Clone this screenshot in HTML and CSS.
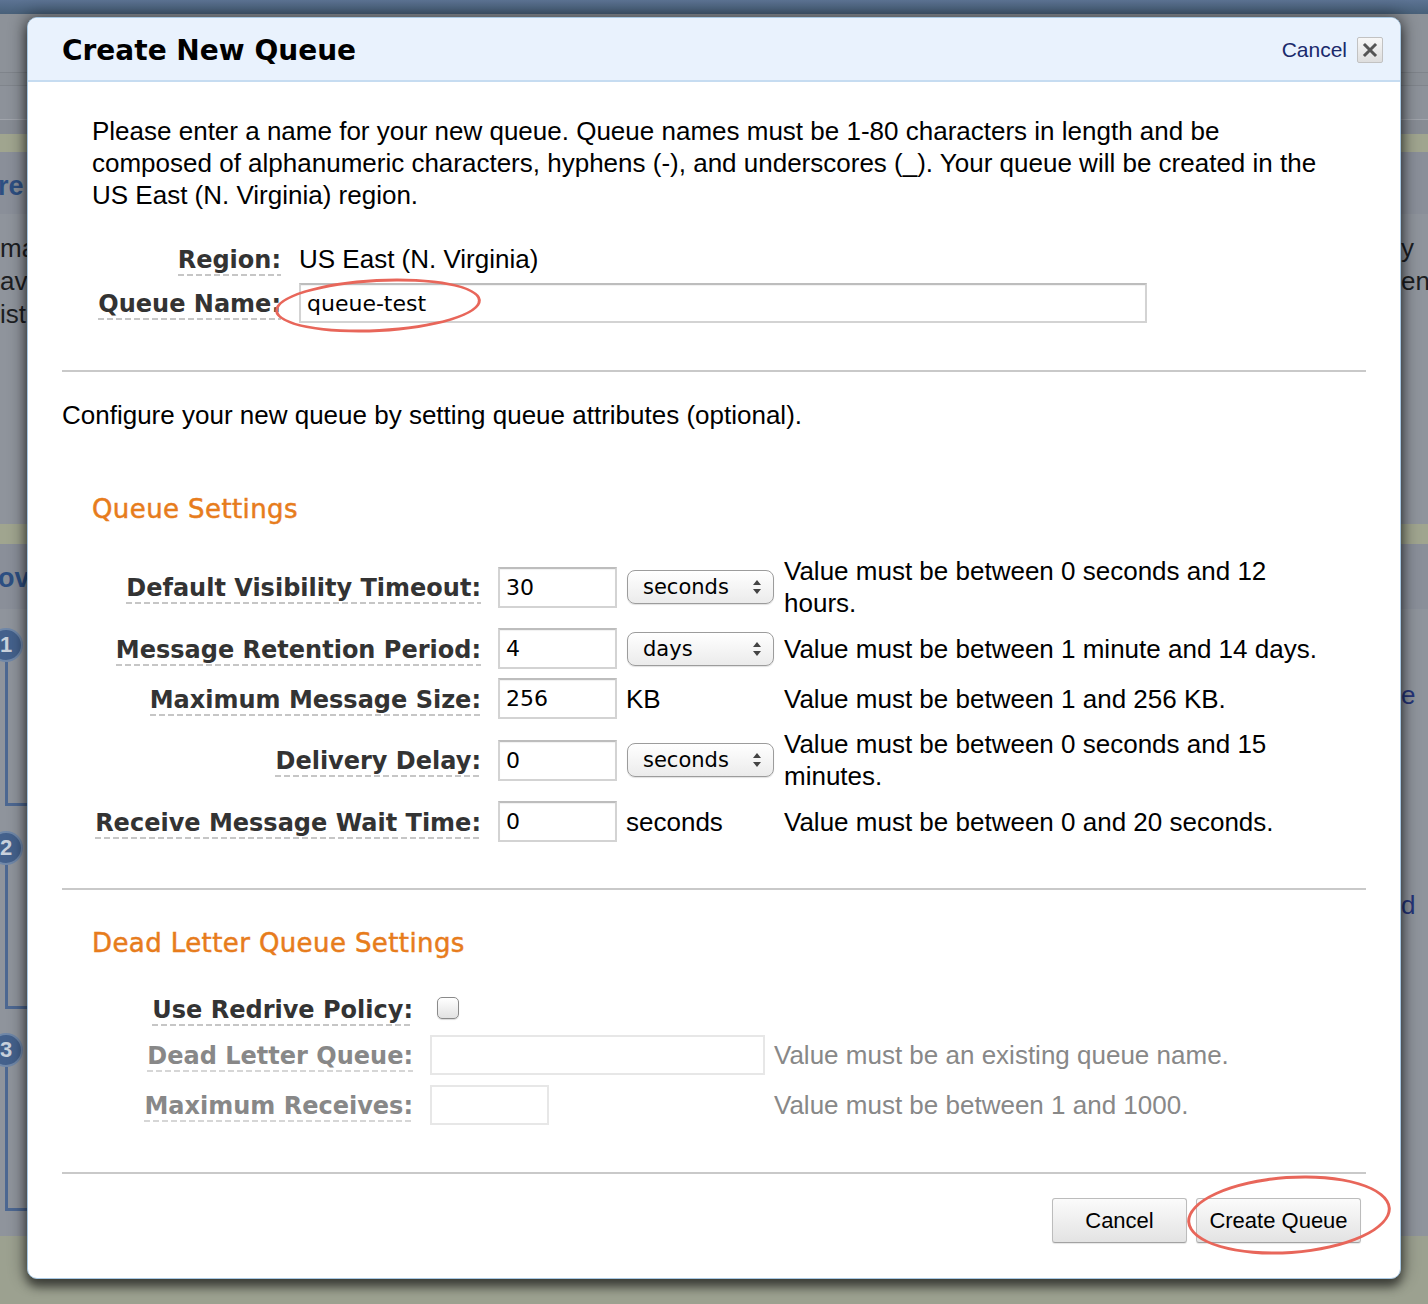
FILE: index.html
```html
<!DOCTYPE html>
<html lang="en">
<head>
<meta charset="utf-8">
<title>Create New Queue</title>
<link rel="stylesheet" href="styles.css">
</head>
<body>
<div class="backdrop">
  <div class="bg-top"></div>
  <div class="bg-nav"></div>
  <div class="bg-sub"></div>
  <div class="bg-olive"></div>
  <div class="bg-band bg-head"><span class="frag-h">re</span><span class="frag-r"></span></div>
  <div class="bg-band bg-text">
    <div class="frag-l"><div>ma</div><div>av</div><div>ist</div></div>
    <div class="frag-r"><div>y</div><div>en</div></div>
  </div>
  <div class="bg-olive bg-olive2"></div>
  <div class="bg-band bg-head2"><span class="frag-h">ov</span><span class="frag-r"></span></div>
  <div class="bg-band bg-steps">
    <div class="steps">
      <div class="step"><span class="num">1</span><div class="step-box"></div></div>
      <div class="step"><span class="num">2</span><div class="step-box"></div></div>
      <div class="step"><span class="num">3</span><div class="step-box"></div></div>
    </div>
    <div class="frag-r frag-r2"><div class="blue">e</div><div class="dk">d</div></div>
  </div>
  <div class="bg-foot"></div>
</div>

<div class="dialog">
  <div class="dlg-head">
    <h1 class="dlg-title">Create New Queue</h1>
    <div class="dlg-close">
      <a class="close-link">Cancel</a>
      <span class="xbtn"><svg width="26" height="26" viewBox="0 0 26 26"><path d="M8 8 L18 18 M18 8 L8 18" stroke="#555" stroke-width="3" stroke-linecap="square"/></svg></span>
    </div>
  </div>
  <div class="dlg-body">
    <p class="intro">Please enter a name for your new queue. Queue names must be 1-80 characters in length and be composed of alphanumeric characters, hyphens (-), and underscores (_). Your queue will be created in the US East (N. Virginia) region.</p>

    <div class="name-grid">
      <div class="lbl"><span>Region:</span></div>
      <div class="val">US East (N. Virginia)</div>
      <div class="lbl"><span>Queue Name:</span></div>
      <div class="field-wrap"><input class="txt txt-wide" type="text" value="queue-test"><span class="mark mark-name"></span></div>
    </div>

    <div class="rule rule-1"></div>
    <p class="config">Configure your new queue by setting queue attributes (optional).</p>

    <h2 class="section section-1">Queue Settings</h2>
    <div class="settings-grid">
      <div class="lbl"><span>Default Visibility Timeout:</span></div>
      <input class="txt txt-sm" type="text" value="30">
      <div class="select"><span>seconds</span><svg class="arr" width="10" height="16" viewBox="0 0 10 16"><path d="M5 1 L9 6 H1 Z M1 10 H9 L5 15 Z" fill="#444"/></svg></div>
      <div class="help">Value must be between 0 seconds and 12 hours.</div>

      <div class="lbl"><span>Message Retention Period:</span></div>
      <input class="txt txt-sm" type="text" value="4">
      <div class="select"><span>days</span><svg class="arr" width="10" height="16" viewBox="0 0 10 16"><path d="M5 1 L9 6 H1 Z M1 10 H9 L5 15 Z" fill="#444"/></svg></div>
      <div class="help">Value must be between 1 minute and 14 days.</div>

      <div class="lbl"><span>Maximum Message Size:</span></div>
      <input class="txt txt-sm" type="text" value="256">
      <div class="unit">KB</div>
      <div class="help">Value must be between 1 and 256 KB.</div>

      <div class="lbl"><span>Delivery Delay:</span></div>
      <input class="txt txt-sm" type="text" value="0">
      <div class="select"><span>seconds</span><svg class="arr" width="10" height="16" viewBox="0 0 10 16"><path d="M5 1 L9 6 H1 Z M1 10 H9 L5 15 Z" fill="#444"/></svg></div>
      <div class="help">Value must be between 0 seconds and 15 minutes.</div>

      <div class="lbl"><span>Receive Message Wait Time:</span></div>
      <input class="txt txt-sm" type="text" value="0">
      <div class="unit">seconds</div>
      <div class="help">Value must be between 0 and 20 seconds.</div>
    </div>

    <div class="rule rule-2"></div>

    <h2 class="section section-2">Dead Letter Queue Settings</h2>
    <div class="dl-grid">
      <div class="lbl"><span>Use Redrive Policy:</span></div>
      <div class="cb-cell"><span class="checkbox"></span></div>
      <div></div>

      <div class="lbl lbl-off"><span>Dead Letter Queue:</span></div>
      <input class="txt txt-off txt-dl" type="text" value="" disabled>
      <div class="help help-off">Value must be an existing queue name.</div>

      <div class="lbl lbl-off"><span>Maximum Receives:</span></div>
      <div><input class="txt txt-off txt-sm" type="text" value="" disabled></div>
      <div class="help help-off">Value must be between 1 and 1000.</div>
    </div>

    <div class="rule rule-3"></div>

    <div class="actions">
      <button class="btn btn-cancel" type="button">Cancel</button>
      <span class="btn-wrap"><button class="btn btn-create" type="button">Create Queue</button><span class="mark mark-create"></span></span>
    </div>
  </div>
</div>
</body>
</html>
```

FILE: styles.css
```css
* { box-sizing: border-box; }

html, body {
  margin: 0;
  padding: 0;
}

body {
  width: 1428px;
  height: 1304px;
  overflow: hidden;
  position: relative;
  background: #8f949c;
  font-family: "Liberation Sans", Arial, sans-serif;
}

/* ---------- dimmed page behind the dialog ---------- */
.backdrop {
  display: flex;
  flex-direction: column;
  height: 1304px;
}

.bg-top {
  flex: none;
  height: 14px;
  background: linear-gradient(#5c7393, #486079);
}

.bg-nav {
  flex: none;
  height: 106px;
  background: linear-gradient(#8d9299 0, #8d9299 58px, #7f848b 58px, #7f848b 59px, #8b9097 59px, #8b9097 71px, #80858c 71px, #80858c 72px, #8d929a 72px);
  border-bottom: 1px solid #a0a4ab;
}

.bg-sub {
  flex: none;
  height: 14px;
  background: #878c94;
}

.bg-olive {
  flex: none;
  height: 18px;
  background: #a0a58f;
}

.bg-olive2 {
  height: 20px;
}

.bg-band {
  flex: none;
  display: flex;
  justify-content: space-between;
}

.bg-head {
  height: 62px;
  padding-top: 6px;
  align-items: center;
  background: #8a8f99;
}

.bg-head2 {
  height: 65px;
  padding-top: 4px;
  align-items: center;
  background: #8a8f99;
}

.frag-h {
  font-weight: bold;
  font-size: 27px;
  color: #2d4f82;
  margin-left: -2px;
}

.bg-text {
  height: 310px;
  padding-top: 18px;
  background: #8f949c;
  font-size: 26px;
  line-height: 33px;
  color: #1c1e22;
}

.frag-r {
  width: 27px;
  font-size: 26px;
  line-height: 33px;
  color: #1c1e22;
}

.bg-steps {
  height: 627px;
  background: #8f949c;
}

.steps {
  display: flex;
  flex-direction: column;
  padding-top: 19px;
  width: 40px;
}

.step {
  height: 204px;
}

.num {
  display: flex;
  align-items: center;
  justify-content: center;
  width: 34px;
  height: 34px;
  margin-left: -11px;
  border-radius: 50%;
  background: #44618c;
  border: 2px solid #6f87a8;
  color: #c9d1dc;
  font-weight: bold;
  font-size: 22px;
}

.step-box {
  margin-left: 5px;
  width: 40px;
  height: 144px;
  border-left: 3px solid #4d6892;
  border-bottom: 3px solid #4d6892;
}

.frag-r2 {
  padding-top: 70px;
  line-height: 33px;
}

.frag-r2 .blue {
  color: #25357a;
}

.frag-r2 .dk {
  margin-top: 177px;
  color: #25357a;
}

.bg-foot {
  flex: 1;
  background: #9ca190;
}

/* ---------- dialog ---------- */
.dialog {
  position: absolute;
  left: 27px;
  top: 17px;
  width: 1374px;
  background: #fff;
  border: 1px solid #a8c8e3;
  border-radius: 10px;
  box-shadow: 0 0 16px 3px rgba(0, 0, 0, 0.45), 0 8px 10px rgba(0, 0, 0, 0.45);
}

.dlg-head {
  height: 64px;
  display: flex;
  align-items: center;
  justify-content: space-between;
  padding: 2px 17px 0 34px;
  background: #e9f2fd;
  border-bottom: 2px solid #c6dcf1;
  border-radius: 9px 9px 0 0;
}

.dlg-title {
  margin: 0;
  font-family: "DejaVu Sans", Verdana, sans-serif;
  font-weight: bold;
  font-size: 28px;
  color: #000;
}

.dlg-close {
  display: flex;
  align-items: center;
  gap: 10px;
}

.close-link {
  font-size: 21px;
  color: #1a2a6c;
}

.xbtn {
  display: block;
  width: 26px;
  height: 26px;
  border: 1px solid #c2c2c2;
  border-radius: 2px;
  background: linear-gradient(#f7f7f7, #dedede);
}

.xbtn svg {
  display: block;
  margin: -1px;
}

.dlg-body {
  padding: 33px 34px 35px 34px;
}

.intro {
  margin: 0 30px 0 30px;
  font-size: 26px;
  line-height: 32px;
  color: #000;
}

/* labels */
.lbl {
  justify-self: end;
  align-self: center;
  margin-top: 4px;
}

.lbl span {
  display: inline-block;
  font-family: "DejaVu Sans", Verdana, sans-serif;
  font-weight: bold;
  font-size: 24px;
  line-height: 28px;
  padding-bottom: 2px;
  color: #333;
  white-space: nowrap;
  background: repeating-linear-gradient(to right, #c6c6c6 0, #c6c6c6 6px, transparent 6px, transparent 9px) left bottom / 100% 2px no-repeat;
}

.lbl-off span {
  color: #888;
  background: repeating-linear-gradient(to right, #d6d6d6 0, #d6d6d6 6px, transparent 6px, transparent 9px) left bottom / 100% 2px no-repeat;
}

/* region & name */
.name-grid {
  display: grid;
  grid-template-columns: 181px 848px;
  grid-template-rows: 32px 40px;
  column-gap: 18px;
  row-gap: 8px;
  margin: 32px 0 0 38px;
  align-items: center;
}

.val {
  font-size: 26px;
  line-height: 32px;
  color: #000;
}

.field-wrap {
  position: relative;
  height: 40px;
}

.txt {
  display: block;
  margin: 0;
  height: 41px;
  border: 2px solid #d3d3d3;
  border-top-color: #bdbdbd;
  border-radius: 0;
  padding: 0 6px;
  background: #fff;
  box-shadow: inset 0 1px 1px rgba(0, 0, 0, 0.06);
  font-family: "DejaVu Sans", Verdana, sans-serif;
  font-size: 22px;
  color: #000;
  outline: none;
}

.txt-wide {
  width: 848px;
  height: 40px;
}

.txt-sm {
  width: 119px;
}

.txt-dl {
  width: 335px;
  height: 40px;
}

.txt-off {
  height: 40px;
  border-color: #e7e7e7;
  box-shadow: none;
}

.mark {
  position: absolute;
  border: 3px solid #e8665a;
  border-radius: 50%;
  pointer-events: none;
}

.mark-name {
  left: -24px;
  top: -4px;
  width: 206px;
  height: 53px;
  transform: rotate(-3deg);
}

/* rules & text */
.rule {
  height: 2px;
  background: #c9c9c9;
}

.rule-1 { margin-top: 47px; }
.rule-2 { margin-top: 46px; }
.rule-3 { margin-top: 47px; }

.config {
  margin: 27px 0 0 0;
  font-size: 26px;
  line-height: 32px;
  color: #000;
}

.section {
  margin: 0 0 0 30px;
  font-family: "DejaVu Sans", Verdana, sans-serif;
  font-weight: normal;
  font-size: 26px;
  line-height: 32px;
  letter-spacing: 0.4px;
  color: #e77c1c;
  -webkit-text-stroke: 0.5px #e77c1c;
}

.section-1 { margin-top: 62px; }
.section-2 { margin-top: 37px; }

/* settings */
.settings-grid {
  display: grid;
  grid-template-columns: 398px 129px 157px 548px;
  row-gap: 9px;
  margin: 30px 0 0 38px;
  align-items: center;
}

.settings-grid .lbl {
  margin-right: 17px;
}

.select {
  display: flex;
  align-items: center;
  justify-content: space-between;
  width: 147px;
  height: 34px;
  padding: 0 11px 0 15px;
  border: 1px solid #9c9c9c;
  border-radius: 8px;
  background: linear-gradient(#ffffff, #ebebeb);
  box-shadow: 0 1px 1px rgba(0, 0, 0, 0.12);
  font-family: "DejaVu Sans", Verdana, sans-serif;
  font-size: 21px;
  color: #000;
}

.select .arr {
  display: block;
}

.unit {
  margin-left: -1px;
  font-size: 26px;
  line-height: 32px;
  color: #000;
}

.help {
  font-size: 26px;
  line-height: 32px;
  color: #000;
}

.help-off {
  color: #888;
}

/* dead letter */
.dl-grid {
  display: grid;
  grid-template-columns: 313px 335px auto;
  grid-template-rows: 32px 40px 40px;
  column-gap: 17px;
  row-gap: 10px;
  margin: 34px 0 0 38px;
  align-items: center;
}

.dl-grid .help {
  margin-left: -8px;
}

.cb-cell {
  display: flex;
  align-items: center;
  height: 32px;
}

.checkbox {
  display: block;
  width: 22px;
  height: 22px;
  margin-left: 7px;
  margin-top: -2px;
  border: 1px solid #8a8a8a;
  border-radius: 5px;
  background: linear-gradient(#ffffff, #e2e2e2);
  box-shadow: 0 1px 1px rgba(0, 0, 0, 0.15);
}

/* actions */
.actions {
  display: flex;
  justify-content: flex-end;
  gap: 9px;
  margin-top: 24px;
  padding-right: 5px;
}

.btn-wrap {
  position: relative;
  display: block;
}

.btn {
  display: block;
  height: 45px;
  margin: 0;
  padding: 0;
  border: 1px solid #bcbcbc;
  border-bottom-color: #a2a2a2;
  border-radius: 3px;
  background: linear-gradient(#fbfbfb, #e3e3e3);
  box-shadow: 0 1px 1px rgba(0, 0, 0, 0.1);
  font-family: "Liberation Sans", Arial, sans-serif;
  font-size: 22px;
  color: #000;
}

.btn-cancel { width: 135px; }
.btn-create { width: 165px; }

.mark-create {
  left: -9px;
  top: -22px;
  width: 204px;
  height: 78px;
  transform: rotate(-4deg);
}
```
